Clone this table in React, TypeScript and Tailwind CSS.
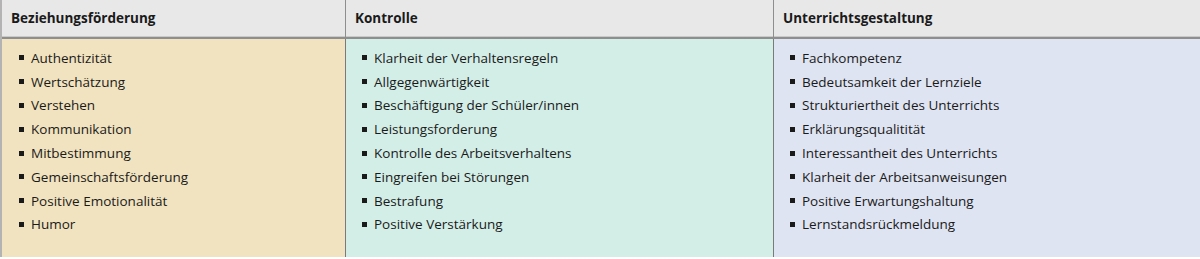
const columns = [
  {
    title: "Beziehungsförderung",
    bg: "bg-[#f1e3bf]",
    items: [
      "Authentizität",
      "Wertschätzung",
      "Verstehen",
      "Kommunikation",
      "Mitbestimmung",
      "Gemeinschaftsförderung",
      "Positive Emotionalität",
      "Humor",
    ],
  },
  {
    title: "Kontrolle",
    bg: "bg-[#d3eee7]",
    items: [
      "Klarheit der Verhaltensregeln",
      "Allgegenwärtigkeit",
      "Beschäftigung der Schüler/innen",
      "Leistungsforderung",
      "Kontrolle des Arbeitsverhaltens",
      "Eingreifen bei Störungen",
      "Bestrafung",
      "Positive Verstärkung",
    ],
  },
  {
    title: "Unterrichtsgestaltung",
    bg: "bg-[#dfe4f2]",
    items: [
      "Fachkompetenz",
      "Bedeutsamkeit der Lernziele",
      "Strukturiertheit des Unterrichts",
      "Erklärungsqualitität",
      "Interessantheit des Unterrichts",
      "Klarheit der Arbeitsanweisungen",
      "Positive Erwartungshaltung",
      "Lernstandsrückmeldung",
    ],
  },
]

export default function App() {
  return (
    <div
      className="w-[1200px] h-[259px] bg-white text-[#1a1a1a]"
      style={{ fontFamily: '"Open Sans", "Noto Sans", sans-serif' }}
    >
      <div className="grid grid-cols-[343px_428px_1fr] border-l-2 border-[#b3b3b3]">
        {/* Header row */}
        {columns.map((col, i) => (
          <div
            key={col.title}
            className={`h-[39px] bg-[#e8e8e8] border-b-2 border-[#8e8e8e] shadow-[inset_0_-1px_0_#c9c9c9] flex items-start pt-[9px] ${
              i === 0 ? "pl-[9px]" : "pl-[9px] border-l border-[#7a7a7a]"
            }`}
          >
            <span className="text-[13.5px] font-bold leading-[18px]">{col.title}</span>
          </div>
        ))}

        {/* Body row */}
        {columns.map((col, i) => (
          <div
            key={col.title + "-body"}
            className={`${col.bg} pt-[7px] pb-[21px] ${
              i === 0 ? "pl-[17px]" : "pl-[16px] border-l border-[#7a7a7a]"
            }`}
          >
            <ul>
              {col.items.map((item) => (
                <li key={item} className="flex items-center h-[23.8px] text-[13.5px]">
                  <span className="w-[5px] h-[5px] bg-[#1a1a1a] mr-[7px] shrink-0" />
                  {item}
                </li>
              ))}
            </ul>
          </div>
        ))}
      </div>
    </div>
  )
}
